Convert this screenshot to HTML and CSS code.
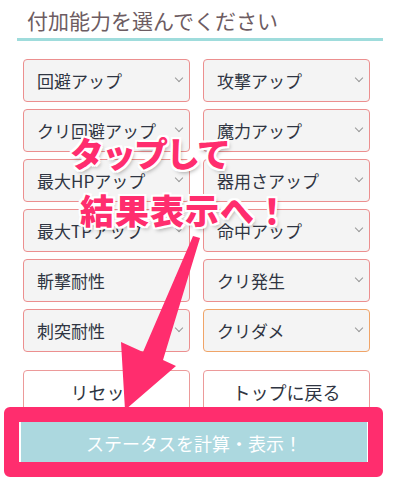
FILE: index.html
```html
<!DOCTYPE html>
<html lang="ja">
<head>
    <meta charset="UTF-8">
    <meta name="viewport" content="width=device-width, initial-scale=1.0">
    <title>付加能力</title>
    <link rel="stylesheet" href="styles.css">
</head>
<body>
    <div class="page">
        <h2 class="title">付加能力を選んでください</h2>

        <div class="grid">
            <div class="field"><select><option>回避アップ</option></select></div>
            <div class="field"><select><option>攻撃アップ</option></select></div>
            <div class="field"><select><option>クリ回避アップ</option></select></div>
            <div class="field"><select><option>魔力アップ</option></select></div>
            <div class="field"><select><option>最大HPアップ</option></select></div>
            <div class="field"><select><option>器用さアップ</option></select></div>
            <div class="field"><select><option>最大TPアップ</option></select></div>
            <div class="field"><select><option>命中アップ</option></select></div>
            <div class="field"><select><option>斬撃耐性</option></select></div>
            <div class="field"><select><option>クリ発生</option></select></div>
            <div class="field"><select><option>刺突耐性</option></select></div>
            <div class="field focus"><select><option>クリダメ</option></select></div>
        </div>

        <div class="actions">
            <button class="btn">リセット</button>
            <button class="btn">トップに戻る</button>
        </div>

        <button class="calc">ステータスを計算・表示！</button>

        <!-- 注釈 -->
        <div class="frame"></div>
        <svg class="arrow" viewBox="0 0 400 479" width="400" height="479">
            <polygon points="193,236 200,238 163,360 176,366 125,410 121,342 143,352" fill="#ff2d6e"/>
        </svg>
        <div class="callout">
            <div class="first">タップして</div>
            <div class="second">結果表示へ！</div>
        </div>
    </div>
</body>
</html>
```

FILE: styles.css
```css
html, body {
    margin: 0;
    overflow: hidden;
}
body {
    font-family: "Noto Sans CJK JP", "Noto Sans", sans-serif;
    background: #fff;
    color: #2f3542;
}
.page {
    position: relative;
    width: 400px;
    height: 479px;
    padding: 0 17px;
    box-sizing: border-box;
}
.title {
    margin: 0;
    padding: 5px 0 3px 10px;
    height: 30px;
    font-size: 21px;
    line-height: 30px;
    font-weight: normal;
    color: #6d5c62;
    border-bottom: 3px solid #9fdcdc;
}
.grid, .actions {
    display: grid;
    grid-template-columns: 167px 167px;
    column-gap: 13px;
    row-gap: 7px;
    margin: 18px 0 0 6px;
}
.field {
    position: relative;
    height: 43px;
}
.field select {
    -webkit-appearance: none;
    appearance: none;
    width: 100%;
    height: 43px;
    margin: 0;
    padding: 0 0 0 13px;
    border: 1px solid #ec8f8f;
    border-radius: 4px;
    background: #f4f4f4;
    font-family: inherit;
    font-size: 17px;
    color: #2f3542;
}
.field.focus select {
    border-color: #f0a468;
}
.field::after {
    content: "";
    position: absolute;
    right: 8px;
    top: 16px;
    width: 5px;
    height: 5px;
    border-right: 1px solid #999;
    border-bottom: 1px solid #999;
    transform: rotate(45deg);
    pointer-events: none;
}
.btn {
    height: 43px;
    margin: 0;
    border: 1px solid #ec9a9a;
    border-radius: 4px;
    background: #fff;
    font-family: inherit;
    font-size: 18px;
    color: #2f3542;
}
.calc {
    display: block;
    width: 350px;
    height: 45px;
    margin: 7px 0 0 2px;
    border: 2px solid #fff;
    background: #acd8df;
    color: #fff;
    font-family: inherit;
    font-size: 18px;
}

/* 注釈 */
.frame {
    position: absolute;
    left: 4px;
    top: 407px;
    width: 379px;
    height: 70px;
    box-sizing: border-box;
    border: 15px solid #ff2d6e;
    border-radius: 6px;
}
.arrow {
    position: absolute;
    left: 0;
    top: 0;
    pointer-events: none;
}
.callout {
    position: absolute;
    left: 70px;
    top: 124px;
    font-size: 34px;
    line-height: 57px;
    font-weight: 900;
    color: #ff2d6e;
    text-shadow: 2px 0 #fff, -2px 0 #fff, 0 2px #fff, 0 -2px #fff,
        2px 2px #fff, -2px -2px #fff, 2px -2px #fff, -2px 2px #fff,
        2px 3px 4px rgba(0,0,0,0.35);
}
.callout .first {
    letter-spacing: -2px;
}
.callout .second {
    margin-left: 10px;
    letter-spacing: 1px;
}
```
